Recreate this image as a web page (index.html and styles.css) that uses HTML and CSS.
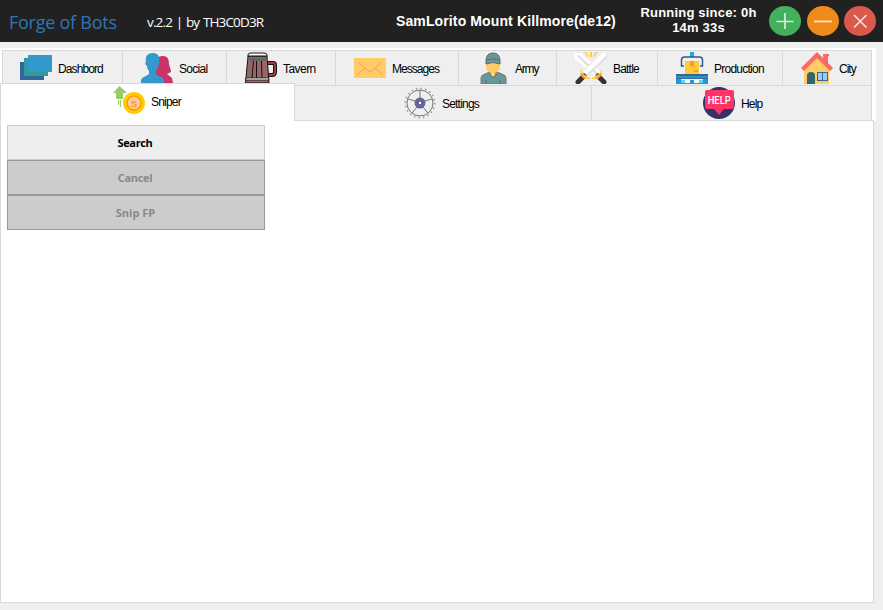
FILE: index.html
```html
<!DOCTYPE html>
<html lang="en">
<head>
<meta charset="utf-8">
<title>Forge of Bots</title>
<link rel="stylesheet" href="styles.css">
</head>
<body>
<header class="titlebar">
  <h1 class="brand">Forge of Bots</h1>
  <span class="version">v.2.2 | by TH3C0D3R</span>
  <span class="world">SamLorito Mount Killmore(de12)</span>
  <div class="uptime">Running since: 0h<br>14m 33s</div>
  <div class="controls">
    <button class="ctl add" aria-label="Add"><svg viewBox="0 0 32 30"><path d="M16 7v16M7.500 15.500h17"/></svg></button>
    <button class="ctl min" aria-label="Minimize"><svg viewBox="0 0 32 30"><path d="M7 15.500h18"/></svg></button>
    <button class="ctl close" aria-label="Close"><svg viewBox="0 0 32 30"><path d="M10 9l12.500 12.500M22.500 9L10 21.500"/></svg></button>
  </div>
</header>
<main class="workspace">
  <nav class="tabs primary">
    <a class="tab"><svg class="icon" viewBox="0 0 32 32"><path fill="#336699" d="M0 10h24v18H0z"/><path fill="#339999" d="M4 6h24v18H4z"/><path fill="#3399cc" d="M8 3h24v17H8z"/></svg><span class="l-dashbord">Dashbord</span></a>
    <a class="tab"><svg class="icon" viewBox="0 0 32 32"><path fill="#cc3366" d="M22 4c5 0 6 4 6 8l2 7c0 2-3 2-4 3l5 4 1 5H15V10c0-4 3-6 7-6z"/><path fill="#3399cc" d="M12 1c5 0 7 4 6 8 1 1 0 4-1 5 0 3-1 4-2 5v3c2 2 7 3 8 6v4H0v-4c1-3 6-4 8-6v-3c-1-1-2-3-2-5-2-1-2-4-1-5-1-5 2-8 7-8z"/></svg><span class="l-social">Social</span></a>
    <a class="tab"><svg class="icon" viewBox="0 0 32 32"><path fill="none" stroke="#111" stroke-width="4" d="M22 11h6q2 0 2 2v7q0 3-3 3h-4"/><path fill="none" stroke="#a43d3d" stroke-width="2" d="M22 11h6q2 0 2 2v7q0 3-3 3h-4"/><path fill="#996666" stroke="#111" d="M3 4h19l2 27H.5z"/><path fill="#fff" stroke="#111" d="M3 3q0-2 3-2h13q3 0 3 2v1H3z"/><path stroke="#111" d="M8.500 9L7 26M16.500 9l.5 17M11.500 9v17"/><path fill="#666" d="M2.500 6h20v3h-20z"/><path fill="#fff" stroke="#111" stroke-width=".8" d="M.8 26h23v2h-23z"/></svg><span class="l-tavern">Tavern</span></a>
    <a class="tab"><svg class="icon" viewBox="0 0 32 32"><path fill="#ffcc66" d="M0 6h32v20H0z"/><path fill="none" stroke="#ff9966" d="M4 10l10 9q2 1 4 0l10-9M3 23l8-7M29 23l-8-7"/></svg><span class="l-messages">Messages</span></a>
    <a class="tab"><svg class="icon" viewBox="0 0 32 32"><path fill="#669999" stroke="#777" d="M4 32v-6q0-3 4-4l5-2h7l5 2q4 1 4 4v6z"/><path fill="#ffcc66" d="M9 11h14v4q0 4-5 6v2l-2 2-2-2v-2q-5-2-5-6z"/><path fill="#669999" stroke="#666" d="M9 9q0-8 7-8t7 8v3q-7-3-14 0z"/><path fill="none" stroke="#666" d="M9 8q7-2 14 0M12 22l4 4 4-4M9 28v4M23 28v4"/><circle cx="17" cy="6" r="1" fill="#a65"/></svg><span class="l-army">Army</span></a>
    <a class="tab"><svg class="icon" viewBox="0 0 32 32"><path fill="#fff" d="M0 1h6l20 20-5 4L0 7z"/><path fill="#e0e0e0" d="M2 4l20 20 2-2L4 3z"/><path fill="#e0e0e0" d="M32 1h-6L7 20l5 5L32 6z"/><path fill="#fff" d="M31 1h-4L8 20l3 3L31 4z"/><path fill="#fc3" d="M9 0h2l3 4-1 1zM15 0h2v5h-2zM21 0h2l-4 5-1-1z"/><path stroke="#333" stroke-width="5" stroke-linecap="round" d="M9 24l-6 6M23 24l6 6"/><path fill="#ffcc44" d="M6 17q0 4 4 6 2 2 5 3v1q-4 1-7-2t-3-7zM26 17q0 4-4 6-2 2-5 3v1q4 1 7-2t3-7z"/><path fill="#ff9933" d="M6 21l5 5-2 1-4-4zM26 21l-5 5 2 1 4-4z"/></svg><span class="l-battle">Battle</span></a>
    <a class="tab"><svg class="icon" viewBox="0 0 32 32"><path fill="#22aadd" d="M14 0h4v5h-4z"/><path fill="none" stroke="#335588" stroke-width="1.500" d="M8 14H5.500V8q0-3 3-3h15q3 0 3 3v6H24"/><path fill="#ffcc33" d="M9 9h14v13H9z"/><path fill="#ff9922" d="M14 9h4v6l-2-1-2 1zM18 18h4v2h-4z"/><path fill="#29c" d="M0 22h32v5H0z"/><path fill="#336699" d="M0 22h32v2H0zM0 26h32v1H0z"/><path fill="#fff" d="M4 28h24v3H4z"/><path fill="#5cd5f5" d="M5 28h4v3H5zM23 28h4v3h-4z"/><path fill="#2299cc" d="M0 27h5v5H0zM27 27h5v5h-5zM14 28h4v3h-4zM0 31h32v1H0z"/></svg><span class="l-production">Production</span></a>
    <a class="tab"><svg class="icon" viewBox="0 0 32 32"><path fill="#ff6666" d="M22 4V2h6v2h-1v9h-4z"/><path fill="#ffcc66" d="M3 15L16 3l12 12v17H3z"/><path fill="#ff6666" d="M16 0l16 16-3 3L16 6 3 19l-3-3z"/><path fill="#336666" d="M6 32v-8q0-4 4-4t4 4v8z"/><path fill="#336699" d="M16 20h11v9H16z"/><path fill="#99ccff" d="M17 21h4v7h-4zM22 21h4v7h-4z"/></svg><span class="l-city">City</span></a>
  </nav>
  <nav class="tabs secondary">
    <a class="tab active"><svg class="icon" viewBox="0 0 32 32"><path fill="#99cc66" d="M6.500 0L14 7h-4v6H3V7H0zM5 14h1v5H5zM7 14h1v7H7z"/><circle cx="21" cy="17" r="11" fill="#ffcc00"/><circle cx="21" cy="17" r="7" fill="#ffcc99" stroke="#ff9900" stroke-width="1.500"/><text x="21" y="20.500" class="coin">S</text></svg><span class="l-sniper">Sniper</span></a>
    <a class="tab"><svg class="icon" viewBox="0 0 32 32"><g fill="none" stroke="#777"><circle cx="16" cy="16" r="13"/><circle cx="16" cy="16" r="14.700" stroke="#999" stroke-width="1.500" stroke-dasharray="1.500 3.120"/><path d="M16 3v8M4 12l7 2M28 12l-7 2M8 26l5-6M24 26l-5-6"/></g><circle cx="16" cy="16" r="5.500" fill="#666699"/><path fill="#fff" d="M15 15h2v2h-2z"/></svg><span class="l-settings">Settings</span></a>
    <a class="tab"><svg class="icon" viewBox="0 0 32 32"><circle cx="16" cy="16" r="16" fill="#333366"/><path fill="#ff3366" d="M4 3h25q2 0 2 2v15q0 2-2 2h-8l-5 6-5-6H4q-2 0-2-2V5q0-2 2-2z"/><text x="16.200" y="17" class="badge" textLength="23" lengthAdjust="spacingAndGlyphs">HELP</text></svg><span class="l-help">Help</span></a>
  </nav>
  <section class="panel">
    <div class="actions">
      <button class="action">Search</button>
      <button class="action" disabled>Cancel</button>
      <button class="action" disabled>Snip FP</button>
    </div>
  </section>
</main>
</body>
</html>
```
FILE: styles.css
```css
* { box-sizing: border-box; }
body { margin: 0; height: 610px; overflow: hidden; background: #efefef; font-family: "Liberation Sans", sans-serif; color: #000; }
button { font: inherit; padding: 0; margin: 0; }
.titlebar { height: 42px; background: #212121; color: #fff; display: flex; align-items: center; white-space: nowrap; padding-left: 9px; }
.brand { margin: 0; width: 138px; padding-top: 2px; font: 400 18px/24px "Open Sans", sans-serif; color: #2f75b5; letter-spacing: -.25px; }
.version { width: 249px; padding-top: 2px; font: 13.500px/20px "Open Sans", sans-serif; letter-spacing: -.85px; word-spacing: 1px; }
.world { width: 236px; font-weight: bold; font-size: 14px; line-height: 18px; letter-spacing: .12px; }
.uptime { width: 134px; text-align: center; font-weight: bold; font-size: 13px; line-height: 15px; letter-spacing: .2px; padding: 0 1px 2px 0; }
.controls { display: flex; gap: 6px; margin-left: 3px; }
.ctl { width: 32px; height: 30px; border: 0; border-radius: 50%; }
.ctl svg { display: block; width: 32px; height: 30px; fill: none; stroke: #fff; stroke-opacity: .8; stroke-width: 1.700; }
.add { background: #43b05c; }
.min { background: #ef8b1d; }
.close { background: #da594b; margin-left: -1px; }
.workspace { margin-top: 6px; width: 876px; padding-top: 2px; background: linear-gradient(#fff 73px, #efefef 73px); }
.tabs { display: grid; }
.primary { grid-template-columns: 120px 104px 109px 123px 98px 101px 125px 90px; margin-left: 2px; width: 870px; height: 35px; }
.secondary { grid-template-columns: 295px 297px 280px; grid-template-rows: 35px; width: 872px; height: 35px; }
.tab { display: flex; align-items: flex-start; gap: 6px; background: #efefef; border-top: 1px solid #d9d9d9; border-left: 1px solid #d9d9d9; font-size: 12px; line-height: 16px; white-space: nowrap; color: #000; }
.tab:last-child { border-right: 1px solid #d9d9d9; }
.primary .tab { padding: 1px 0 0 18px; }
.primary .tab:first-child { padding-left: 17px; }
.secondary .tab { padding: 1px 0 0 109px; }
.secondary .tab:nth-child(2) { border-left: 0; }
.secondary .tab:last-child { margin-left: -1px; padding-left: 111px; }
.secondary .active { position: relative; margin-top: -2px; height: 38px; padding: 2px 0 0 113px; gap: 5px; background: #fff; border-right: 1px solid #d9d9d9; z-index: 1; }
.secondary .active .icon { margin-left: -1px; margin-right: 1px; }
.icon { flex: none; width: 32px; height: 32px; }
.tab span { padding-top: 9px; letter-spacing: -.55px; }
.tab .l-dashbord { letter-spacing: -.9px; }
.tab .l-social { letter-spacing: -.7px; }
.tab .l-messages { letter-spacing: -.95px; }
.tab .l-army { letter-spacing: -1.200px; }
.tab .l-production { letter-spacing: -.75px; }
.tab .l-city { letter-spacing: -1px; }
.tab .l-settings { letter-spacing: -.8px; }
.tab .l-help { letter-spacing: -.8px; }
.tab .l-sniper, .tab .l-battle { letter-spacing: -.8px; }
.secondary .active span { padding-top: 8px; }
.coin { font: bold 9px "Liberation Sans", sans-serif; fill: #ff9900; text-anchor: middle; }
.badge { font: 500 11px Roboto, sans-serif; fill: #fff; text-anchor: middle; }
.panel { width: 874px; height: 483px; background: #fff; border: 1px solid #d9d9d9; padding: 4px 6px; }
.actions { display: flex; flex-direction: column; width: 258px; }
.action { height: 35px; background: #eee; border: 1px solid #ccc; padding-right: 2px; font: bold 11px/20px "Open Sans", sans-serif; letter-spacing: -.35px; color: #000; }
.action:disabled { background: #ccc; border-color: #999; color: #888; }
.action:nth-child(3) { letter-spacing: 0; padding-right: 1px; }
```
